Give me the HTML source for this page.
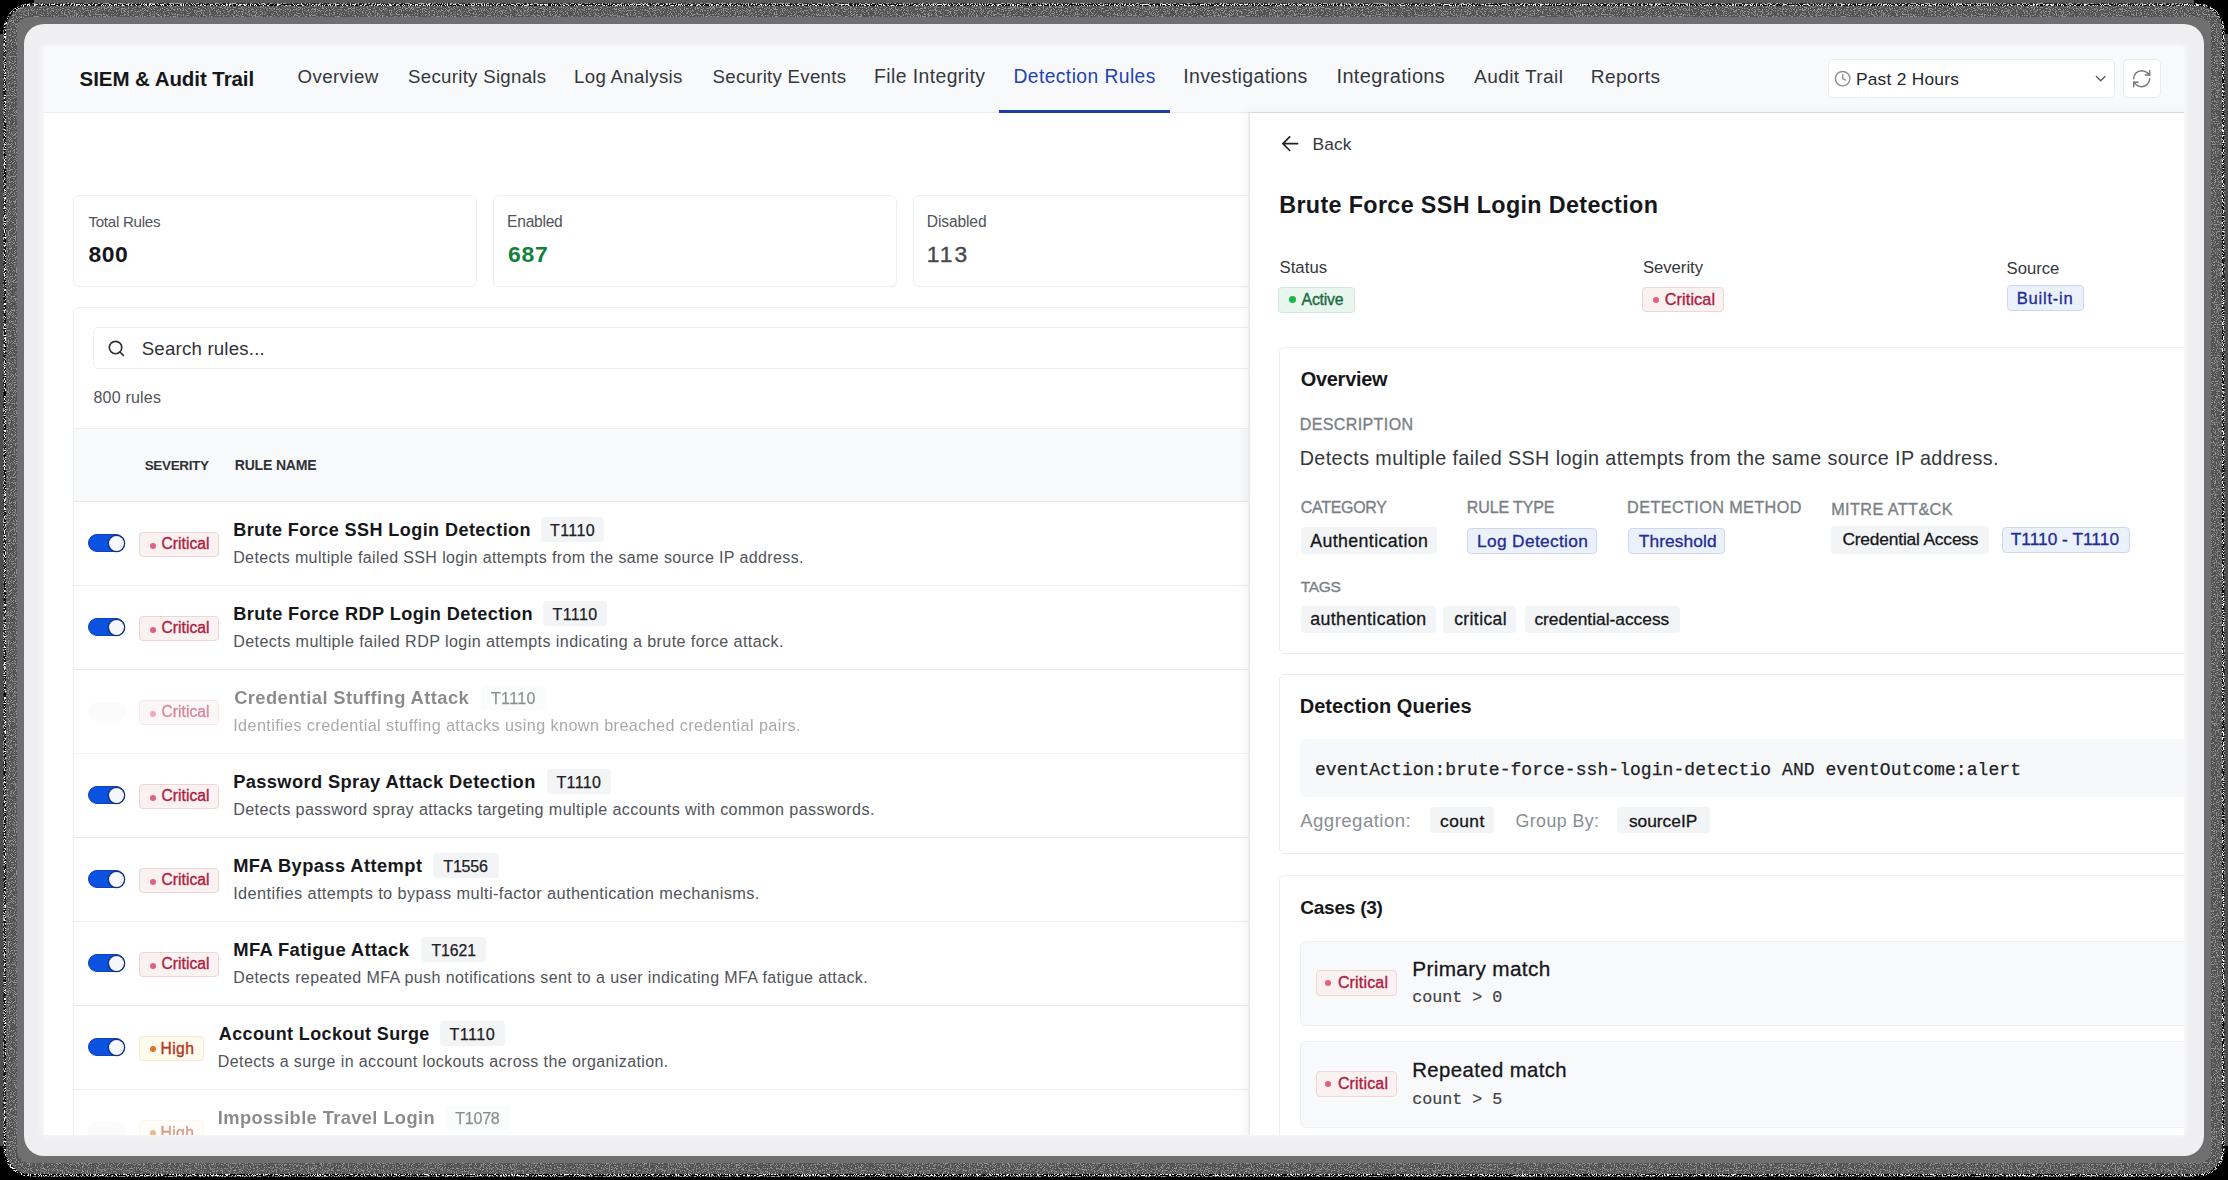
<!DOCTYPE html>
<html><head><meta charset="utf-8"><title>SIEM &amp; Audit Trail - Detection Rules</title>
<style>
html,body{margin:0;padding:0;}
body{width:2228px;height:1180px;overflow:hidden;position:relative;background:#000;font-family:"Liberation Sans",sans-serif;}
.b{position:absolute;box-sizing:border-box;}
.t{position:absolute;white-space:pre;font-family:"Liberation Sans",sans-serif;}
svg{position:absolute;overflow:visible;}
#frame{position:absolute;left:5px;top:4px;width:2218px;height:1171px;border-radius:27px;background:#6f6f6f;}
#win{position:absolute;left:24px;top:24px;width:2180px;height:1132px;border-radius:20px;background:#efeff1;overflow:hidden;}
#app{position:absolute;left:44px;top:46px;width:2140px;height:1089px;background:#fff;overflow:hidden;box-shadow:0 0 7px 1px rgba(255,255,255,.75);}
#app>.in,#panel>.in{position:absolute;left:-44px;top:-46px;width:2228px;height:1180px;}
#panel{position:absolute;left:1205.6px;top:66.6px;width:994.4000000000001px;height:1032.4px;background:#fff;overflow:hidden;box-shadow:-1.6px 0 0 #e6e8eb,-4px 0 10px rgba(15,23,42,.05);}
#panel>.in{left:-1249.6px;top:-112.6px;}
</style></head><body>
<div class="b" style="left:34px;top:0;width:2160px;height:8px;background:#5a5a5a"></div><div class="b" style="left:34px;top:1170px;width:2160px;height:7px;background:#4a4a4a"></div><div class="b" style="left:0;top:34px;width:8px;height:1112px;background:#4e4e4e"></div><div class="b" style="left:2220px;top:34px;width:8px;height:1112px;background:#4e4e4e"></div>
<div id="frame"></div>
<div id="win"></div>
<div id="app"><div class="in">
<div class="b" style="left:44px;top:46px;width:2140px;height:66.8px;background:#f8f9fb;border-bottom:1.4px solid #e9ebee;"></div>
<div class="b" style="left:1248px;top:111.6px;width:936px;height:1.4px;background:#dde0e4;"></div>
<div class="b" style="left:999.3px;top:109.8px;width:170.6px;height:2.8px;background:#1e3fa8;"></div>
<div class="b" style="left:1828.3px;top:58.7px;width:286.9px;height:39px;background:#fff;border:1.2px solid #e9ebee;border-radius:5px;"></div>
<div class="b" style="left:2122.7px;top:58.7px;width:38.8px;height:39px;background:#fff;border:1.2px solid #e9ebee;border-radius:5px;"></div>
<div class="b" style="left:72.6px;top:195px;width:404.6px;height:91.8px;background:#fff;border:1.2px solid #f0f1f3;border-radius:6px;box-shadow:0 1px 2px rgba(15,23,42,.025);"></div>
<div class="b" style="left:492.8px;top:195px;width:404.6px;height:91.8px;background:#fff;border:1.2px solid #f0f1f3;border-radius:6px;box-shadow:0 1px 2px rgba(15,23,42,.025);"></div>
<div class="b" style="left:913px;top:195px;width:404.6px;height:91.8px;background:#fff;border:1.2px solid #f0f1f3;border-radius:6px;box-shadow:0 1px 2px rgba(15,23,42,.025);"></div>
<div class="b" style="left:1333.2px;top:195px;width:404.6px;height:91.8px;background:#fff;border:1.2px solid #f0f1f3;border-radius:6px;box-shadow:0 1px 2px rgba(15,23,42,.025);"></div>
<div class="b" style="left:1753.4px;top:195px;width:404.6px;height:91.8px;background:#fff;border:1.2px solid #f0f1f3;border-radius:6px;box-shadow:0 1px 2px rgba(15,23,42,.025);"></div>
<div class="b" style="left:73px;top:307.3px;width:2082.4px;height:992.7px;background:#fff;border:1.2px solid #f0f1f3;border-radius:6px;box-shadow:0 1px 2px rgba(15,23,42,.025);"></div>
<div class="b" style="left:93.2px;top:326.7px;width:2041.8px;height:42.7px;background:#fff;border:1.2px solid #eceef1;border-radius:5px;"></div>
<div class="b" style="left:74.2px;top:428px;width:2080px;height:73.8px;background:#f8f9fb;border-top:1.2px solid #eceef1;border-bottom:1.4px solid #e6e8ec;"></div>
<div class="b" style="left:88.2px;top:533.9px;width:37.3px;height:18.6px;background:#0b52e0;border:1.1px solid #1440b0;border-radius:9.3px;"></div>
<div class="b" style="left:109.3px;top:535.6px;width:14.8px;height:15px;background:#f5f7fc;border-radius:7.5px;box-shadow:0 0 0 1.3px #12307f;"></div>
<div class="b" style="left:139.4px;top:532.1px;width:79.4px;height:25.4px;background:#faf1f1;border:1.2px solid #edd5d9;border-radius:4px;"></div>
<div class="b" style="left:150.2px;top:542.7px;width:6px;height:6px;background:#e1607e;border-radius:3px;"></div>
<div class="b" style="left:540.5px;top:517.3px;width:63.6px;height:24.4px;background:#f3f4f6;border-radius:4px;"></div>
<div class="b" style="left:74.2px;top:584.9px;width:2080px;height:1.4px;background:#e9ebee;"></div>
<div class="b" style="left:88.2px;top:617.9px;width:37.3px;height:18.6px;background:#0b52e0;border:1.1px solid #1440b0;border-radius:9.3px;"></div>
<div class="b" style="left:109.3px;top:619.6px;width:14.8px;height:15px;background:#f5f7fc;border-radius:7.5px;box-shadow:0 0 0 1.3px #12307f;"></div>
<div class="b" style="left:139.4px;top:616.1px;width:79.4px;height:25.4px;background:#faf1f1;border:1.2px solid #edd5d9;border-radius:4px;"></div>
<div class="b" style="left:150.2px;top:626.7px;width:6px;height:6px;background:#e1607e;border-radius:3px;"></div>
<div class="b" style="left:543px;top:601.3px;width:63.6px;height:24.4px;background:#f3f4f6;border-radius:4px;"></div>
<div class="b" style="left:74.2px;top:668.9px;width:2080px;height:1.4px;background:#e9ebee;"></div>
<div class="b" style="left:88.1px;top:702px;width:37.7px;height:18.5px;background:#fbfbfc;border-radius:9.3px;"></div>
<div class="b" style="left:139.4px;top:700.1px;width:79.4px;height:25.4px;background:#faf1f1;border:1.2px solid #edd5d9;border-radius:4px;opacity:0.5;"></div>
<div class="b" style="left:150.2px;top:710.7px;width:6px;height:6px;background:#e1607e;border-radius:3px;opacity:0.5;"></div>
<div class="b" style="left:481px;top:685.3px;width:64px;height:24.4px;background:#f3f4f6;border-radius:4px;opacity:0.4;"></div>
<div class="b" style="left:74.2px;top:752.9px;width:2080px;height:1.4px;background:#f4f5f7;"></div>
<div class="b" style="left:88.2px;top:785.9px;width:37.3px;height:18.6px;background:#0b52e0;border:1.1px solid #1440b0;border-radius:9.3px;"></div>
<div class="b" style="left:109.3px;top:787.6px;width:14.8px;height:15px;background:#f5f7fc;border-radius:7.5px;box-shadow:0 0 0 1.3px #12307f;"></div>
<div class="b" style="left:139.4px;top:784.1px;width:79.4px;height:25.4px;background:#faf1f1;border:1.2px solid #edd5d9;border-radius:4px;"></div>
<div class="b" style="left:150.2px;top:794.7px;width:6px;height:6px;background:#e1607e;border-radius:3px;"></div>
<div class="b" style="left:546.5px;top:769.3px;width:64px;height:24.4px;background:#f3f4f6;border-radius:4px;"></div>
<div class="b" style="left:74.2px;top:836.9px;width:2080px;height:1.4px;background:#e9ebee;"></div>
<div class="b" style="left:88.2px;top:869.9px;width:37.3px;height:18.6px;background:#0b52e0;border:1.1px solid #1440b0;border-radius:9.3px;"></div>
<div class="b" style="left:109.3px;top:871.6px;width:14.8px;height:15px;background:#f5f7fc;border-radius:7.5px;box-shadow:0 0 0 1.3px #12307f;"></div>
<div class="b" style="left:139.4px;top:868.1px;width:79.4px;height:25.4px;background:#faf1f1;border:1.2px solid #edd5d9;border-radius:4px;"></div>
<div class="b" style="left:150.2px;top:878.7px;width:6px;height:6px;background:#e1607e;border-radius:3px;"></div>
<div class="b" style="left:432.7px;top:853.3px;width:66.6px;height:24.4px;background:#f3f4f6;border-radius:4px;"></div>
<div class="b" style="left:74.2px;top:920.9px;width:2080px;height:1.4px;background:#e9ebee;"></div>
<div class="b" style="left:88.2px;top:953.9px;width:37.3px;height:18.6px;background:#0b52e0;border:1.1px solid #1440b0;border-radius:9.3px;"></div>
<div class="b" style="left:109.3px;top:955.6px;width:14.8px;height:15px;background:#f5f7fc;border-radius:7.5px;box-shadow:0 0 0 1.3px #12307f;"></div>
<div class="b" style="left:139.4px;top:952.1px;width:79.4px;height:25.4px;background:#faf1f1;border:1.2px solid #edd5d9;border-radius:4px;"></div>
<div class="b" style="left:150.2px;top:962.7px;width:6px;height:6px;background:#e1607e;border-radius:3px;"></div>
<div class="b" style="left:420.6px;top:937.3px;width:65.9px;height:24.4px;background:#f3f4f6;border-radius:4px;"></div>
<div class="b" style="left:74.2px;top:1004.9px;width:2080px;height:1.4px;background:#e9ebee;"></div>
<div class="b" style="left:88.2px;top:1037.9px;width:37.3px;height:18.6px;background:#0b52e0;border:1.1px solid #1440b0;border-radius:9.3px;"></div>
<div class="b" style="left:109.3px;top:1039.6px;width:14.8px;height:15px;background:#f5f7fc;border-radius:7.5px;box-shadow:0 0 0 1.3px #12307f;"></div>
<div class="b" style="left:139.4px;top:1036px;width:65.1px;height:25.2px;background:#fffaee;border:1.2px solid #f8e9cb;border-radius:4px;"></div>
<div class="b" style="left:150.1px;top:1045.7px;width:6.2px;height:6.2px;background:#e0741e;border-radius:3.1px;"></div>
<div class="b" style="left:440.2px;top:1021.3px;width:64.6px;height:24.4px;background:#f3f4f6;border-radius:4px;"></div>
<div class="b" style="left:74.2px;top:1088.9px;width:2080px;height:1.4px;background:#e9ebee;"></div>
<div class="b" style="left:88.1px;top:1122px;width:37.7px;height:18.5px;background:#fbfbfc;border-radius:9.3px;"></div>
<div class="b" style="left:139.4px;top:1120px;width:65.1px;height:25.2px;background:#fffaee;border:1.2px solid #f8e9cb;border-radius:4px;opacity:0.3;"></div>
<div class="b" style="left:150.1px;top:1129.7px;width:6.2px;height:6.2px;background:#e0741e;border-radius:3.1px;opacity:0.5;"></div>
<div class="b" style="left:445.8px;top:1105.3px;width:64.2px;height:24.4px;background:#f3f4f6;border-radius:4px;opacity:0.4;"></div>
<svg style="left:1834.3px;top:69.6px" width="17.33" height="17.33" viewBox="0 0 24 24" fill="none" stroke="#8d9096" stroke-width="1.9" stroke-linecap="round" stroke-linejoin="round"><circle cx="12" cy="12" r="10"/><path d="M12 6v6l4 2"/></svg>
<svg style="left:2091.6px;top:69.6px" width="17.33" height="17.33" viewBox="0 0 24 24" fill="none" stroke="#55585e" stroke-width="1.8" stroke-linecap="round" stroke-linejoin="round"><path d="m6 9 6 6 6-6"/></svg>
<svg style="left:2130.9px;top:67.7px" width="21.33" height="21.33" viewBox="0 0 24 24" fill="none" stroke="#74777d" stroke-width="1.7" stroke-linecap="round" stroke-linejoin="round"><path d="M3 12a9 9 0 0 1 9-9 9.75 9.75 0 0 1 6.74 2.74L21 8"/><path d="M21 3v5h-5"/><path d="M21 12a9 9 0 0 1-9 9 9.75 9.75 0 0 1-6.74-2.74L3 16"/><path d="M8 16H3v5"/></svg>
<svg style="left:106.7px;top:338.9px" width="18.67" height="18.67" viewBox="0 0 24 24" fill="none" stroke="#2b2e33" stroke-width="2.1" stroke-linecap="round" stroke-linejoin="round"><circle cx="11" cy="11" r="8"/><path d="m21 21-4.3-4.3"/></svg>
<span class="t" style="left:79.6px;top:64.9px;font-size:20.5px;line-height:27px;color:#15171a;letter-spacing:-0.07px;font-weight:700;">SIEM &amp; Audit Trail</span>
<span class="t" style="left:297.5px;top:64.4px;font-size:18.7px;line-height:25px;color:#34373c;letter-spacing:0.4px;">Overview</span>
<span class="t" style="left:408.1px;top:64.4px;font-size:18.67px;line-height:25px;color:#34373c;letter-spacing:0.28px;">Security Signals</span>
<span class="t" style="left:574px;top:64.4px;font-size:18.67px;line-height:25px;color:#34373c;letter-spacing:0.33px;">Log Analysis</span>
<span class="t" style="left:712.5px;top:64.4px;font-size:18.67px;line-height:25px;color:#34373c;letter-spacing:0.28px;">Security Events</span>
<span class="t" style="left:874px;top:63.4px;font-size:19.36px;line-height:26px;color:#34373c;letter-spacing:0.42px;">File Integrity</span>
<span class="t" style="left:1183.2px;top:63.4px;font-size:19.57px;line-height:26px;color:#34373c;letter-spacing:0.35px;">Investigations</span>
<span class="t" style="left:1336.5px;top:63.4px;font-size:19.98px;line-height:26px;color:#34373c;letter-spacing:0.36px;">Integrations</span>
<span class="t" style="left:1474px;top:64.4px;font-size:19.09px;line-height:25px;color:#34373c;letter-spacing:0.41px;">Audit Trail</span>
<span class="t" style="left:1590.8px;top:64.4px;font-size:19.08px;line-height:25px;color:#34373c;letter-spacing:0.42px;">Reports</span>
<span class="t" style="left:1013.4px;top:64.4px;font-size:19.3px;line-height:26px;color:#1f44b0;letter-spacing:0.42px;">Detection Rules</span>
<span class="t" style="left:1855.9px;top:67.5px;font-size:17.33px;line-height:23px;color:#23262b;letter-spacing:0.26px;">Past 2 Hours</span>
<span class="t" style="left:88.4px;top:212.2px;font-size:15.15px;line-height:20px;color:#505359;letter-spacing:-0.27px;">Total Rules</span>
<span class="t" style="left:88.4px;top:239.4px;font-size:22.86px;line-height:30px;color:#15171a;letter-spacing:0.64px;font-weight:700;">800</span>
<span class="t" style="left:507.1px;top:211.2px;font-size:15.58px;line-height:21px;color:#505359;letter-spacing:-0.25px;">Enabled</span>
<span class="t" style="left:508.1px;top:239.4px;font-size:22.98px;line-height:30px;color:#14803a;letter-spacing:0.68px;font-weight:700;">687</span>
<span class="t" style="left:926.8px;top:211.2px;font-size:15.6px;line-height:21px;color:#505359;letter-spacing:-0.13px;">Disabled</span>
<span class="t" style="left:926.8px;top:239.4px;font-size:22.8px;line-height:30px;color:#46494f;letter-spacing:2.07px;-webkit-text-stroke:0.4px #46494f;">113</span>
<span class="t" style="left:141.7px;top:336px;font-size:18.67px;line-height:25px;color:#2f3237;letter-spacing:0.2px;">Search rules...</span>
<span class="t" style="left:93.4px;top:386.8px;font-size:16px;line-height:21px;color:#505359;letter-spacing:0.22px;">800 rules</span>
<span class="t" style="left:144.7px;top:456.9px;font-size:13.5px;line-height:18px;color:#2f3237;letter-spacing:-0.35px;font-weight:700;">SEVERITY</span>
<span class="t" style="left:234.7px;top:455.9px;font-size:14.04px;line-height:19px;color:#2f3237;letter-spacing:-0.18px;font-weight:700;">RULE NAME</span>
<span class="t" style="left:161.5px;top:533.2px;font-size:15.6px;line-height:21px;color:#ae1a42;letter-spacing:0.05px;-webkit-text-stroke:0.35px #ae1a42;">Critical</span>
<span class="t" style="left:233.2px;top:517.8px;font-size:18.06px;line-height:24px;color:#15171a;letter-spacing:0.42px;font-weight:700;">Brute Force SSH Login Detection</span>
<span class="t" style="left:550px;top:519.8px;font-size:16.04px;line-height:21px;color:#1d2024;letter-spacing:0.41px;-webkit-text-stroke:0.25px #1d2024;">T1110</span>
<span class="t" style="left:233.2px;top:546.9px;font-size:16px;line-height:21px;color:#505359;letter-spacing:0.38px;">Detects multiple failed SSH login attempts from the same source IP address.</span>
<span class="t" style="left:161.5px;top:617.2px;font-size:15.6px;line-height:21px;color:#ae1a42;letter-spacing:0.05px;-webkit-text-stroke:0.35px #ae1a42;">Critical</span>
<span class="t" style="left:233.2px;top:601.8px;font-size:18.16px;line-height:24px;color:#15171a;letter-spacing:0.41px;font-weight:700;">Brute Force RDP Login Detection</span>
<span class="t" style="left:552.5px;top:603.8px;font-size:16.04px;line-height:21px;color:#1d2024;letter-spacing:0.41px;-webkit-text-stroke:0.25px #1d2024;">T1110</span>
<span class="t" style="left:233.2px;top:630.9px;font-size:16.13px;line-height:21px;color:#505359;letter-spacing:0.41px;">Detects multiple failed RDP login attempts indicating a brute force attack.</span>
<span class="t" style="left:161.5px;top:701.2px;font-size:15.6px;line-height:21px;color:#ae1a42;letter-spacing:0.05px;opacity:0.5;-webkit-text-stroke:0.35px #ae1a42;">Critical</span>
<span class="t" style="left:234.2px;top:685.8px;font-size:18.38px;line-height:24px;color:#15171a;letter-spacing:0.39px;font-weight:700;opacity:0.5;">Credential Stuffing Attack</span>
<span class="t" style="left:491px;top:687.8px;font-size:16px;line-height:21px;color:#1d2024;letter-spacing:0.35px;opacity:0.5;-webkit-text-stroke:0.25px #1d2024;">T1110</span>
<span class="t" style="left:233.2px;top:713.9px;font-size:16.21px;line-height:22px;color:#505359;letter-spacing:0.4px;opacity:0.5;">Identifies credential stuffing attacks using known breached credential pairs.</span>
<span class="t" style="left:161.5px;top:785.2px;font-size:15.6px;line-height:21px;color:#ae1a42;letter-spacing:0.05px;-webkit-text-stroke:0.35px #ae1a42;">Critical</span>
<span class="t" style="left:233.2px;top:769.8px;font-size:18.26px;line-height:24px;color:#15171a;letter-spacing:0.39px;font-weight:700;">Password Spray Attack Detection</span>
<span class="t" style="left:556.4px;top:771.8px;font-size:16px;line-height:21px;color:#1d2024;letter-spacing:0.4px;-webkit-text-stroke:0.25px #1d2024;">T1110</span>
<span class="t" style="left:233.2px;top:798.9px;font-size:16.15px;line-height:21px;color:#505359;letter-spacing:0.39px;">Detects password spray attacks targeting multiple accounts with common passwords.</span>
<span class="t" style="left:161.5px;top:869.2px;font-size:15.6px;line-height:21px;color:#ae1a42;letter-spacing:0.05px;-webkit-text-stroke:0.35px #ae1a42;">Critical</span>
<span class="t" style="left:233.2px;top:853.8px;font-size:18.3px;line-height:24px;color:#15171a;letter-spacing:0.43px;font-weight:700;">MFA Bypass Attempt</span>
<span class="t" style="left:443.3px;top:855.8px;font-size:16px;line-height:21px;color:#1d2024;letter-spacing:-0.19px;-webkit-text-stroke:0.25px #1d2024;">T1556</span>
<span class="t" style="left:233.2px;top:881.9px;font-size:16.35px;line-height:22px;color:#505359;letter-spacing:0.39px;">Identifies attempts to bypass multi-factor authentication mechanisms.</span>
<span class="t" style="left:161.5px;top:953.2px;font-size:15.6px;line-height:21px;color:#ae1a42;letter-spacing:0.05px;-webkit-text-stroke:0.35px #ae1a42;">Critical</span>
<span class="t" style="left:233.2px;top:937.8px;font-size:18.41px;line-height:24px;color:#15171a;letter-spacing:0.37px;font-weight:700;">MFA Fatigue Attack</span>
<span class="t" style="left:431.5px;top:939.8px;font-size:15.73px;line-height:21px;color:#1d2024;letter-spacing:-0.03px;-webkit-text-stroke:0.25px #1d2024;">T1621</span>
<span class="t" style="left:233.2px;top:966.9px;font-size:16.02px;line-height:21px;color:#505359;letter-spacing:0.4px;">Detects repeated MFA push notifications sent to a user indicating MFA fatigue attack.</span>
<span class="t" style="left:160.5px;top:1037.8px;font-size:15.65px;line-height:21px;color:#b4341f;letter-spacing:0.41px;-webkit-text-stroke:0.35px #b4341f;">High</span>
<span class="t" style="left:218.8px;top:1021.8px;font-size:17.93px;line-height:24px;color:#15171a;letter-spacing:0.42px;font-weight:700;">Account Lockout Surge</span>
<span class="t" style="left:449.5px;top:1022.8px;font-size:16.23px;line-height:22px;color:#1d2024;letter-spacing:0.44px;-webkit-text-stroke:0.25px #1d2024;">T1110</span>
<span class="t" style="left:217.8px;top:1050.9px;font-size:16.01px;line-height:21px;color:#505359;letter-spacing:0.4px;">Detects a surge in account lockouts across the organization.</span>
<span class="t" style="left:160.5px;top:1121.8px;font-size:15.65px;line-height:21px;color:#b4341f;letter-spacing:0.41px;opacity:0.5;-webkit-text-stroke:0.35px #b4341f;">High</span>
<span class="t" style="left:217.8px;top:1105.8px;font-size:18.31px;line-height:24px;color:#15171a;letter-spacing:0.38px;font-weight:700;opacity:0.5;">Impossible Travel Login</span>
<span class="t" style="left:455.3px;top:1107.8px;font-size:16px;line-height:21px;color:#1d2024;letter-spacing:-0.24px;opacity:0.5;-webkit-text-stroke:0.25px #1d2024;">T1078</span>
<span class="t" style="left:217.8px;top:1135.9px;font-size:15.38px;line-height:20px;color:#505359;letter-spacing:-0.25px;opacity:0.5;">Detects logins from geographically impossible locations within a short time window.</span>
</div>
<div id="panel"><div class="in">
<div class="b" style="left:1278.2px;top:287.1px;width:76.7px;height:25.5px;background:#e8f6ee;border:1.2px solid #d2e8db;border-radius:4px;"></div>
<div class="b" style="left:1288.8px;top:296.2px;width:7.2px;height:7.2px;background:#19b84b;border-radius:3.6px;"></div>
<div class="b" style="left:1642.1px;top:287.2px;width:82.4px;height:25.1px;background:#faf1f1;border:1.2px solid #edd5d9;border-radius:4px;"></div>
<div class="b" style="left:1652.8px;top:297.1px;width:6.2px;height:6.2px;background:#e1607e;border-radius:3.1px;"></div>
<div class="b" style="left:2007.2px;top:285.2px;width:76.4px;height:26.2px;background:#ebf1fa;border:1.2px solid #cdd8ec;border-radius:4px;"></div>
<div class="b" style="left:1278.8px;top:346.8px;width:1021.2px;height:306.8px;background:#fff;border:1.2px solid #ebedf0;border-radius:6px;"></div>
<div class="b" style="left:1300.7px;top:527.4px;width:136.4px;height:26.2px;background:#f3f4f6;border-radius:4px;"></div>
<div class="b" style="left:1467.3px;top:527.8px;width:129.9px;height:25.8px;background:#ebf1fa;border:1.2px solid #cdd8ec;border-radius:4px;"></div>
<div class="b" style="left:1628.1px;top:527.8px;width:97.3px;height:25.8px;background:#ebf1fa;border:1.2px solid #cdd8ec;border-radius:4px;"></div>
<div class="b" style="left:1831.1px;top:526.3px;width:158.2px;height:27.3px;background:#f3f4f6;border-radius:4px;"></div>
<div class="b" style="left:2001.5px;top:527px;width:128.2px;height:26.3px;background:#ebf1fa;border:1.2px solid #cdd8ec;border-radius:4px;"></div>
<div class="b" style="left:1300.7px;top:606.3px;width:135.2px;height:26.4px;background:#f3f4f6;border-radius:4px;"></div>
<div class="b" style="left:1443.4px;top:606.3px;width:72.4px;height:26.4px;background:#f3f4f6;border-radius:4px;"></div>
<div class="b" style="left:1525.1px;top:606.3px;width:155.3px;height:26.4px;background:#f3f4f6;border-radius:4px;"></div>
<div class="b" style="left:1278.8px;top:673.6px;width:1021.2px;height:180.8px;background:#fff;border:1.2px solid #ebedf0;border-radius:6px;"></div>
<div class="b" style="left:1300.2px;top:738.8px;width:999.8px;height:58.4px;background:#f7f8fa;border-radius:6px;"></div>
<div class="b" style="left:1429.6px;top:807.4px;width:64.8px;height:26.1px;background:#f3f4f6;border-radius:4px;"></div>
<div class="b" style="left:1617.3px;top:807.4px;width:92.5px;height:26.1px;background:#f3f4f6;border-radius:4px;"></div>
<div class="b" style="left:1278.8px;top:875.3px;width:1021.2px;height:424.7px;background:#fff;border:1.2px solid #ebedf0;border-radius:6px;"></div>
<div class="b" style="left:1300.2px;top:940.6px;width:999.8px;height:85.4px;background:#f8f9fb;border:1.2px solid #eef0f3;border-radius:6px;"></div>
<div class="b" style="left:1315.7px;top:970.2px;width:81.2px;height:25.6px;background:#faf1f1;border:1.2px solid #edd5d9;border-radius:4px;"></div>
<div class="b" style="left:1325.2px;top:979.9px;width:6.2px;height:6.2px;background:#e1607e;border-radius:3.1px;"></div>
<div class="b" style="left:1300.2px;top:1041.1px;width:999.8px;height:87.4px;background:#f8f9fb;border:1.2px solid #eef0f3;border-radius:6px;"></div>
<div class="b" style="left:1315.7px;top:1071.4px;width:81.2px;height:26px;background:#faf1f1;border:1.2px solid #edd5d9;border-radius:4px;"></div>
<div class="b" style="left:1325.2px;top:1081.1px;width:6.2px;height:6.2px;background:#e1607e;border-radius:3.1px;"></div>
<svg style="left:1281.8px;top:136.2px" width="16.4" height="15.4" viewBox="0 0 16.4 15.4" fill="none" stroke="#1f2226" stroke-width="1.7" stroke-linecap="round" stroke-linejoin="round"><path d="M15.6 7.7H1M7.7 0.9L0.9 7.7l6.8 6.8"/></svg>
<span class="t" style="left:1312.6px;top:133.2px;font-size:17.33px;line-height:23px;color:#34373c;letter-spacing:0.11px;">Back</span>
<span class="t" style="left:1279.2px;top:190px;font-size:23.3px;line-height:31px;color:#15171a;letter-spacing:0.37px;font-weight:700;">Brute Force SSH Login Detection</span>
<span class="t" style="left:1279.5px;top:257.4px;font-size:16.7px;line-height:22px;color:#34373c;letter-spacing:0.05px;">Status</span>
<span class="t" style="left:1642.9px;top:257.4px;font-size:16.7px;line-height:22px;color:#34373c;letter-spacing:-0.02px;">Severity</span>
<span class="t" style="left:2006.6px;top:257.8px;font-size:16.7px;line-height:22px;color:#34373c;letter-spacing:-0.02px;">Source</span>
<span class="t" style="left:1301.6px;top:288.8px;font-size:15.8px;line-height:21px;color:#186b3f;letter-spacing:-0.21px;-webkit-text-stroke:0.35px #186b3f;">Active</span>
<span class="t" style="left:1664.7px;top:287.8px;font-size:16.2px;line-height:22px;color:#ae1a42;letter-spacing:0.13px;-webkit-text-stroke:0.35px #ae1a42;">Critical</span>
<span class="t" style="left:2016.7px;top:287.9px;font-size:16.6px;line-height:22px;color:#1f2c94;letter-spacing:0.77px;-webkit-text-stroke:0.3px #1f2c94;">Built-in</span>
<span class="t" style="left:1300.7px;top:365.7px;font-size:19.95px;line-height:26px;color:#15171a;letter-spacing:-0.25px;font-weight:700;">Overview</span>
<span class="t" style="left:1299.7px;top:414px;font-size:16px;line-height:21px;color:#7b7f86;letter-spacing:0.4px;-webkit-text-stroke:0.35px #7b7f86;">DESCRIPTION</span>
<span class="t" style="left:1299.7px;top:444.6px;font-size:19.76px;line-height:26px;color:#34373c;letter-spacing:0.4px;">Detects multiple failed SSH login attempts from the same source IP address.</span>
<span class="t" style="left:1300.7px;top:497.4px;font-size:15.97px;line-height:21px;color:#7b7f86;letter-spacing:-0.26px;-webkit-text-stroke:0.35px #7b7f86;">CATEGORY</span>
<span class="t" style="left:1466.8px;top:497.4px;font-size:16px;line-height:21px;color:#7b7f86;letter-spacing:-0.13px;-webkit-text-stroke:0.35px #7b7f86;">RULE TYPE</span>
<span class="t" style="left:1627.1px;top:496.4px;font-size:16.2px;line-height:22px;color:#7b7f86;letter-spacing:0.41px;-webkit-text-stroke:0.35px #7b7f86;">DETECTION METHOD</span>
<span class="t" style="left:1831.2px;top:497.6px;font-size:16.21px;line-height:22px;color:#7b7f86;letter-spacing:0.43px;-webkit-text-stroke:0.35px #7b7f86;">MITRE ATT&amp;CK</span>
<span class="t" style="left:1310.2px;top:528.6px;font-size:17.73px;line-height:24px;color:#15171a;letter-spacing:0.42px;-webkit-text-stroke:0.3px #15171a;">Authentication</span>
<span class="t" style="left:1477.1px;top:529.6px;font-size:17.33px;line-height:23px;color:#1f2c94;letter-spacing:0.32px;-webkit-text-stroke:0.3px #1f2c94;">Log Detection</span>
<span class="t" style="left:1638.7px;top:529.6px;font-size:17.33px;line-height:23px;color:#1f2c94;letter-spacing:0.12px;-webkit-text-stroke:0.3px #1f2c94;">Threshold</span>
<span class="t" style="left:1842.4px;top:528.4px;font-size:17.33px;line-height:23px;color:#15171a;letter-spacing:-0.16px;-webkit-text-stroke:0.3px #15171a;">Credential Access</span>
<span class="t" style="left:2010.7px;top:528.4px;font-size:17.33px;line-height:23px;color:#1f2c94;letter-spacing:0.01px;-webkit-text-stroke:0.3px #1f2c94;">T1110 - T1110</span>
<span class="t" style="left:1300.7px;top:576.4px;font-size:15.52px;line-height:21px;color:#7b7f86;letter-spacing:-0.35px;-webkit-text-stroke:0.35px #7b7f86;">TAGS</span>
<span class="t" style="left:1310.2px;top:607.1px;font-size:17.76px;line-height:24px;color:#15171a;letter-spacing:0.42px;-webkit-text-stroke:0.3px #15171a;">authentication</span>
<span class="t" style="left:1454.2px;top:608.1px;font-size:17.49px;line-height:23px;color:#15171a;letter-spacing:0.41px;-webkit-text-stroke:0.3px #15171a;">critical</span>
<span class="t" style="left:1534.4px;top:608.1px;font-size:17.33px;line-height:23px;color:#15171a;letter-spacing:0px;-webkit-text-stroke:0.3px #15171a;">credential-access</span>
<span class="t" style="left:1299.7px;top:693.1px;font-size:20px;line-height:26px;color:#15171a;letter-spacing:0.05px;font-weight:700;">Detection Queries</span>
<span class="t" style="left:1315px;top:757.7px;font-size:18px;line-height:24px;color:#202327;letter-spacing:0.06px;font-family:'Liberation Mono',monospace;-webkit-text-stroke:0.25px #202327;">eventAction:brute-force-ssh-login-detectio AND eventOutcome:alert</span>
<span class="t" style="left:1300.2px;top:807.8px;font-size:18.63px;line-height:25px;color:#8a8e95;letter-spacing:0.45px;">Aggregation:</span>
<span class="t" style="left:1440.1px;top:809.8px;font-size:17.38px;line-height:23px;color:#15171a;letter-spacing:0.41px;-webkit-text-stroke:0.3px #15171a;">count</span>
<span class="t" style="left:1515.5px;top:808.8px;font-size:17.8px;line-height:24px;color:#8a8e95;letter-spacing:0.42px;">Group By:</span>
<span class="t" style="left:1628.9px;top:809.8px;font-size:17.33px;line-height:23px;color:#15171a;letter-spacing:0px;-webkit-text-stroke:0.3px #15171a;">sourceIP</span>
<span class="t" style="left:1300.2px;top:894.5px;font-size:19.12px;line-height:25px;color:#15171a;letter-spacing:-0.28px;font-weight:700;">Cases (3)</span>
<span class="t" style="left:1337.9px;top:971.8px;font-size:16px;line-height:21px;color:#ae1a42;letter-spacing:0.17px;-webkit-text-stroke:0.35px #ae1a42;">Critical</span>
<span class="t" style="left:1412.3px;top:954.7px;font-size:20.76px;line-height:27px;color:#15171a;letter-spacing:0.35px;-webkit-text-stroke:0.3px #15171a;">Primary match</span>
<span class="t" style="left:1412.3px;top:987.1px;font-size:16.7px;line-height:22px;color:#3f4247;letter-spacing:-0.03px;font-family:'Liberation Mono',monospace;-webkit-text-stroke:0.2px #3f4247;">count &gt; 0</span>
<span class="t" style="left:1337.9px;top:1072.9px;font-size:16px;line-height:21px;color:#ae1a42;letter-spacing:0.17px;-webkit-text-stroke:0.35px #ae1a42;">Critical</span>
<span class="t" style="left:1412.3px;top:1056.5px;font-size:20.3px;line-height:27px;color:#15171a;letter-spacing:0.42px;-webkit-text-stroke:0.3px #15171a;">Repeated match</span>
<span class="t" style="left:1412.3px;top:1088.9px;font-size:16.7px;line-height:22px;color:#3f4247;letter-spacing:-0.03px;font-family:'Liberation Mono',monospace;-webkit-text-stroke:0.2px #3f4247;">count &gt; 5</span>
</div></div>
</div>
<svg width="2228" height="1180" viewBox="0 0 2228 1180" style="left:0;top:0;pointer-events:none"><defs><filter id="nz" x="0" y="0" width="2228" height="1180" filterUnits="userSpaceOnUse" color-interpolation-filters="sRGB"><feTurbulence type="fractalNoise" baseFrequency="0.85" numOctaves="2" seed="7" result="n"/><feColorMatrix in="n" type="matrix" values="10 0 0 0 -4.9 10 0 0 0 -4.9 10 0 0 0 -4.9 0 0 0 0 1" result="bw"/><feComposite in="bw" in2="SourceGraphic" operator="in"/></filter><filter id="nz2" x="0" y="0" width="2228" height="1180" filterUnits="userSpaceOnUse" color-interpolation-filters="sRGB"><feTurbulence type="fractalNoise" baseFrequency="0.85" numOctaves="2" seed="11" result="n"/><feColorMatrix in="n" type="matrix" values="10 0 0 0 -5.25 10 0 0 0 -5.25 10 0 0 0 -5.25 0 0 0 0 1" result="bw"/><feComposite in="bw" in2="SourceGraphic" operator="in"/></filter></defs><path filter="url(#nz)" fill-rule="evenodd" d="M30.0 3.5H2198.0A26.5 26.5 0 0 1 2224.5 30.0V1150.0A26.5 26.5 0 0 1 2198.0 1176.5H30.0A26.5 26.5 0 0 1 3.5 1150.0V30.0A26.5 26.5 0 0 1 30.0 3.5ZM30 6H2198A24 24 0 0 1 2222 30V1150A24 24 0 0 1 2198 1174H30A24 24 0 0 1 6 1150V30A24 24 0 0 1 30 6Z"/><path filter="url(#nz2)" fill-rule="evenodd" opacity="0.25" d="M30 6H2198A24 24 0 0 1 2222 30V1150A24 24 0 0 1 2198 1174H30A24 24 0 0 1 6 1150V30A24 24 0 0 1 30 6ZM30 17H2198A13 13 0 0 1 2211 30V1150A13 13 0 0 1 2198 1163H30A13 13 0 0 1 17 1150V30A13 13 0 0 1 30 17Z"/></svg>
</body></html>
